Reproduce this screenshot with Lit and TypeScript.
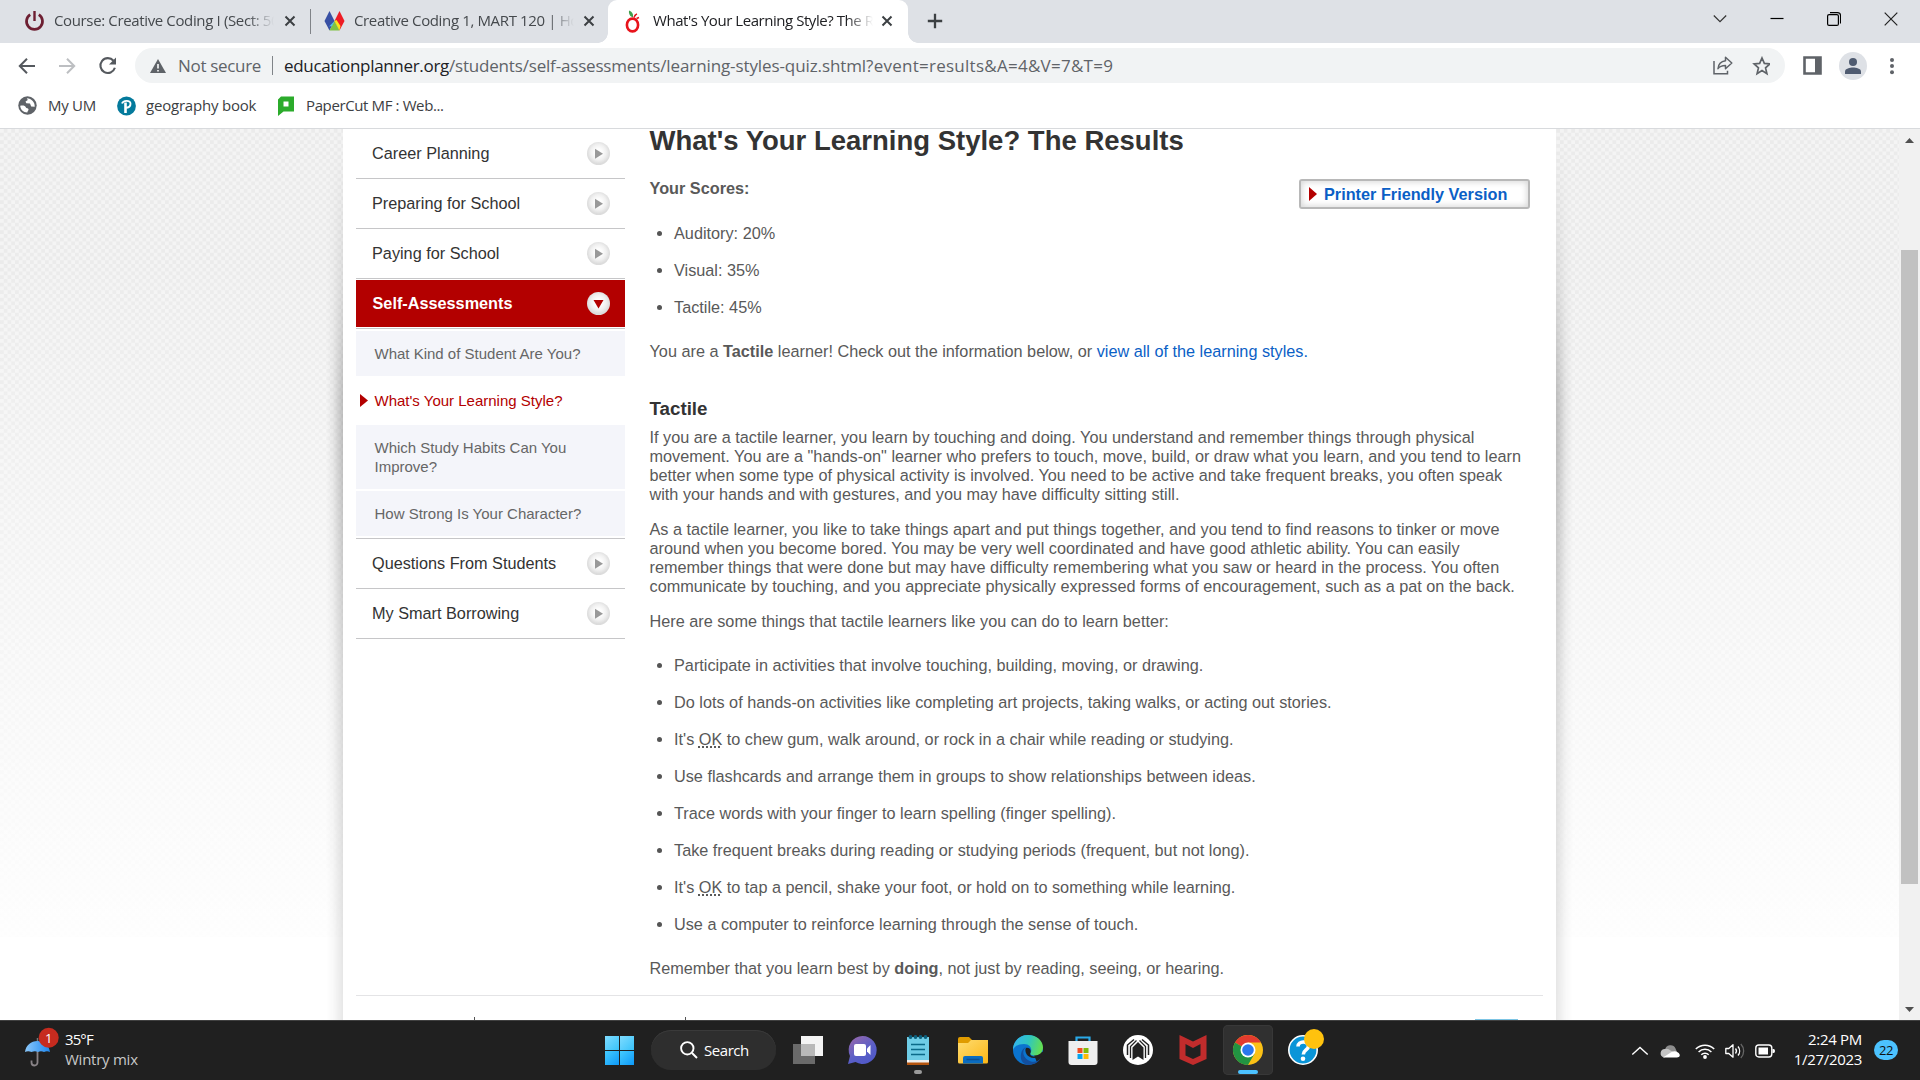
import { LitElement, html, svg, css, nothing } from "lit";
import { customElement, property } from "lit/decorators.js";

const closeIcon = html`<svg width="12" height="12" viewBox="0 0 12 12"><path d="M1.5 1.5l9 9M10.5 1.5l-9 9" stroke="#3c4043" stroke-width="2" fill="none"/></svg>`;

@customElement("browser-tabs")
class BrowserTabs extends LitElement {
  static styles = css`
    :host { display: grid; grid-template-columns: 598px 320px 34px 1fr 57px 57px 57px 58px; height: 43px; background: #dee1e6; font: 15px "Open Sans", "Noto Sans", sans-serif; color: #45494d; }
    svg { display: block; }
    .idle { display: grid; grid-template-columns: 24px 22px 8px 220px 10px 12px 8px 20px 22px 8px 229px 12px; align-items: center; height: 42px; }
    .idle .sep { width: 1px; height: 25px; background: #808388; margin-left: 6px; }
    .title { white-space: nowrap; overflow: hidden; letter-spacing: -0.36px; line-height: 22px; width: 220px; margin-top: -2px; -webkit-mask-image: linear-gradient(90deg, #000 88%, transparent); mask-image: linear-gradient(90deg, #000 88%, transparent); }
    .active .title { letter-spacing: -0.45px; }
    .active { display: grid; grid-template-columns: 10px 300px 10px; }
    .body { background: #fff; border-radius: 9px 9px 0 0; display: grid; grid-template-columns: 16px 20px 9px 220px 8px 13px; align-items: center; height: 43px; padding-bottom: 1px; box-sizing: border-box; color: #202124; }
    .curve { align-self: end; width: 10px; height: 10px; background: radial-gradient(circle at 0 0, transparent 9.5px, #fff 10px); }
    .curve.r { background: radial-gradient(circle at 100% 0, transparent 9.5px, #fff 10px); }
    .mid { align-self: center; justify-self: center; margin-bottom: 1px; }
    .ctl { justify-self: center; margin-top: 12px; }
  `;
  render() {
    return html`
      <div class="idle">
        <span></span>
        <svg width="21" height="22" viewBox="0 0 21 22"><path d="M6.2 4.6A8 8 0 1 0 14.8 4.6" fill="none" stroke="#6d1f32" stroke-width="2.7"/><path d="M10.5 1v10" stroke="#6d1f32" stroke-width="2.4"/></svg>
        <span></span><span class="title">Course: Creative Coding I (Sect: 50</span><span></span>
        ${closeIcon}<span></span>
        <span class="sep"></span>
        <svg width="21" height="22" viewBox="0 0 21 22"><path d="M5.5 1l5 10-5 9.500-5-9.500z" fill="#3850a4"/><path d="M15.500 1l5 10-5 9.500-5-9.500z" fill="#ee1c25"/><path d="M10.500 11l5 9.500h-10z" fill="#7ec242"/><path d="M10.500 11l2-1 4 6-1 4.500z" fill="#f8e71c"/><path d="M8 16l2.500-5L5 16.500z" fill="#4fc3e8"/></svg>
        <span></span><span class="title">Creative Coding 1, MART 120 | Hom</span>
        ${closeIcon}
      </div>
      <div class="active">
        <span class="curve"></span>
        <div class="body">
          <span></span>
          <svg width="18" height="25" viewBox="0 0 18 25"><ellipse cx="8.500" cy="16" rx="5.600" ry="6.400" fill="none" stroke="#e8141c" stroke-width="2.600"/><path d="M8 8C5.500 7 4.500 4 5 1.500 8 2.500 9.500 5 9 8z" fill="#3f9f4d"/><path d="M10 8.500c.5-2 1.500-3 3-3.600M12.500 9.500l2.500-1" stroke="#e8141c" stroke-width="1.500"/></svg>
          <span></span><span class="title">What's Your Learning Style? The Res</span><span></span>
          ${closeIcon}
        </div>
        <span class="curve r"></span>
      </div>
      <svg class="mid" width="16" height="16" viewBox="0 0 16 16"><path d="M8 .8v14.400M.8 8h14.400" stroke="#3c4043" stroke-width="2.300"/></svg>
      <span></span>
      <svg class="ctl" width="14" height="14" viewBox="0 0 14 14"><path d="M.8 3.500L7 9.700l6.200-6.200" fill="none" stroke="#333" stroke-width="1.200"/></svg>
      <svg class="ctl" width="14" height="14" viewBox="0 0 14 14"><path d="M.5 6.500h13" stroke="#000" stroke-width="1.200"/></svg>
      <svg class="ctl" width="14" height="14" viewBox="0 0 14 14"><rect x=".6" y="2.600" width="10.800" height="10.800" rx="1.500" fill="none" stroke="#000" stroke-width="1.200"/><path d="M3 .6h7.500a3 3 0 0 1 3 3v7.800" fill="none" stroke="#000" stroke-width="1.100"/></svg>
      <svg class="ctl" width="14" height="14" viewBox="0 0 14 14"><path d="M.7.7l12.600 12.600M13.300.7L.7 13.300" stroke="#222" stroke-width="1.200"/></svg>
    `;
  }
}

@customElement("browser-toolbar")
class BrowserToolbar extends LitElement {
  static styles = css`
    :host { display: block; height: 85px; background: #fff; border-bottom: 1px solid #d8dadd; font-family: "Open Sans", "Noto Sans", sans-serif; }
    svg { display: block; }
    .nav { display: grid; grid-template-columns: 18px 40px 40px 37px 1650px 18px 20px 16px 28px 18px 10px; align-items: center; padding-top: 5px; height: 35px; }
    .pill { height: 35px; border-radius: 18px; background: #f1f3f4; display: grid; grid-template-columns: 15px 17px 11px 94px 12px 1fr 20px 37px 15px; align-items: center; font-size: 17px; line-height: 24px; white-space: nowrap; color: #5f6368; box-sizing: border-box; }
    .sec { letter-spacing: -0.32px; }
    .bar { width: 1px; height: 19px; background: #808488; }
    .url { letter-spacing: -0.32px; }
    .url b { font-weight: 400; color: #202124; }
    .dir { letter-spacing: -0.18px; } .file { letter-spacing: -0.1px; } .query { letter-spacing: 0.26px; }
    .avatar { width: 28px; height: 28px; border-radius: 50%; background: #dee1e6; display: grid; place-items: center; }
    .marks { display: grid; grid-template-columns: 18px 20px 10px 69px 20px 9px 132px 18px 10px 1fr; align-items: center; height: 45px; font-size: 15px; line-height: 22px; color: #3c4043; white-space: nowrap; }
    .marks span { margin-top: -2px; }
    .m1 { letter-spacing: -0.3px; } .m2 { letter-spacing: -0.2px; } .m3 { letter-spacing: -0.38px; }
  `;
  render() {
    return html`
      <div class="nav">
        <span></span>
        <svg width="18" height="18" viewBox="0 0 18 18"><path d="M17 9H2M9 1.800L1.800 9 9 16.200" fill="none" stroke="#55595e" stroke-width="2"/></svg>
        <svg width="18" height="18" viewBox="0 0 18 18"><path d="M1 9h15M9 1.800L16.200 9 9 16.200" fill="none" stroke="#bdbfc2" stroke-width="2"/></svg>
        <svg width="20" height="20" viewBox="0 0 20 20"><path d="M15.500 4.800A7.400 7.400 0 1 0 16.900 11.800" fill="none" stroke="#55595e" stroke-width="2.100"/><path d="M18 1.500v7h-7z" fill="#55595e"/></svg>
        <div class="pill">
          <span></span>
          <svg width="16" height="14" viewBox="0 0 16 14"><path d="M8 0l8 14H0z" fill="#5f6368"/><path d="M8 5v4.500M8 11v1.600" stroke="#f1f3f4" stroke-width="1.700"/></svg>
          <span></span><span class="sec">Not secure</span><i class="bar"></i>
          <span class="url"><b>educationplanner.org</b><span class="dir">/students/self-assessments/</span><span class="file">learning-styles-quiz.shtml</span><span class="query">?event=results&amp;A=4&amp;V=7&amp;T=9</span></span>
          <svg width="20" height="19" viewBox="0 0 20 19"><path d="M1 5v12.800h13.500v-3" fill="none" stroke="#5f6368" stroke-width="1.500"/><path d="M12.500 1.300l6.300 5.700-6.300 5.700V9.500c-4 0-6 1-7.500 3.200.3-4.500 3-7.400 7.500-8z" fill="none" stroke="#5f6368" stroke-width="1.500" stroke-linejoin="round"/></svg>
          <svg width="37" height="20" viewBox="0 0 37 20"><path d="M29 2l2.350 5.450 5.500.5-4.300 3.900 1.350 5.800L29 14.550l-4.900 3.100 1.350-5.800-4.300-3.900 5.500-.5z" fill="none" stroke="#5f6368" stroke-width="1.700"/></svg>
          <span></span>
        </div>
        <span></span>
        <svg width="19" height="19" viewBox="0 0 19 19"><path d="M1.500 1.500h16v16h-16z" fill="#fff" stroke="#5f6368" stroke-width="2.600"/><path d="M12 1h6v17h-6z" fill="#5f6368"/></svg>
        <span></span>
        <span class="avatar"><svg width="16" height="16" viewBox="0 0 16 16"><circle cx="8" cy="4" r="4" fill="#4f5b70"/><path d="M0 16v-2.500C0 10.500 5 9.500 8 9.500s8 1 8 4V16z" fill="#4f5b70"/></svg></span>
        <span></span>
        <svg width="10" height="18" viewBox="0 0 10 18"><g fill="#5f6368"><circle cx="7" cy="3" r="2"/><circle cx="7" cy="9" r="2"/><circle cx="7" cy="15.300" r="2"/></g></svg>
      </div>
      <div class="marks">
        <span></span>
        <svg width="19" height="19" viewBox="0 0 19 19"><circle cx="9.500" cy="9.500" r="9.200" fill="#5f6368"/><path d="M2.200 9.800c3-.6 5 0 5.600 1.400.5 1.300 2.400.6 2.700 2 .2 1.200-1 1.500-1.200 3.300-4 0-7-3-7.100-6.700zM8.800 2.300l1 1.700-2.300 1.600.8 1.700 3.700.2 1.200 2.900 3.500.3c.3-4.200-3-8.100-7.900-8.400z" fill="#fff"/></svg>
        <span></span><span class="m1">My UM</span>
        <svg width="19" height="20" viewBox="0 0 19 20"><circle cx="9.500" cy="10" r="9.400" fill="#047a9c"/><path d="M8.500 17V6.500" stroke="#fff" stroke-width="2.600"/><path d="M5 7.500C6 4.500 13.500 3.500 13.500 7.800c0 3-2.500 4-5 4" fill="none" stroke="#fff" stroke-width="1.900"/></svg>
        <span></span><span class="m2">geography book</span>
        <svg width="16" height="20" viewBox="0 0 16 20"><path d="M3 .5h13v15H5.500L0 20V3.500z" fill="#2bab2b"/><path d="M5.500 5.500h5v5h-5z" fill="#fff"/></svg>
        <span></span><span class="m3">PaperCut MF : Web...</span>
      </div>
    `;
  }
}

@customElement("side-nav")
class SideNav extends LitElement {
  static styles = css`
    :host { display: block; width: 269px; font: 16.25px/22px "Liberation Sans", Arial, sans-serif; color: #333; }
    .item { box-sizing: border-box; height: 50px; border-bottom: 1px solid #c6c6c8; display: flex; align-items: center; justify-content: space-between; padding: 0 15px 2px 16px; white-space: nowrap; }
    .item.open { height: 47px; background: #b30000; color: #fff; font-weight: 700; border: 0; margin-top: 1px; padding-left: 16.500px; }
    .rule { height: 1px; background: #c6c6c8; margin-top: 1px; }
    .dot { width: 23px; height: 23px; border-radius: 50%; background: radial-gradient(circle closest-side at 50% 45%, #fdfdfd 35%, #f0f0f0 75%, #dcdcdc 110%); display: grid; place-items: center; margin-top: 2px; }
    .sub { font-size: 15px; line-height: 19px; color: #666; background: #f4f5fa; padding: 13px 30px 13px 18.500px; margin-top: 2px; }
    .sub.on { background: none; color: #b30000; display: grid; grid-template-columns: 14.500px 1fr; padding-left: 4px; align-items: center; }
    .end { margin-top: 2px; }
  `;
  row(label: string) {
    return html`<div class="item"><span>${label}</span><span class="dot"><svg width="9" height="12" viewBox="0 0 9 12"><path d="M1 .8l8 5-8 5z" fill="#999"/></svg></span></div>`;
  }
  render() {
    return html`
      ${["Career Planning", "Preparing for School", "Paying for School"].map((l) => this.row(l))}
      <div class="item open"><span>Self-Assessments</span><span class="dot"><svg width="11" height="10" viewBox="0 0 11 10"><path d="M.5 1h10l-5 8.500z" fill="#b30000"/></svg></span></div>
      <div class="rule"></div>
      <div class="sub">What Kind of Student Are You?</div>
      <div class="sub on"><svg width="8" height="13" viewBox="0 0 8 13"><path d="M0 0l8 6.500L0 13z" fill="#b30000"/></svg><span>What's Your Learning Style?</span></div>
      <div class="sub">Which Study Habits Can You<br>Improve?</div>
      <div class="sub">How Strong Is Your Character?</div>
      <div class="rule end"></div>
      ${["Questions From Students", "My Smart Borrowing"].map((l) => this.row(l))}
    `;
  }
}

@customElement("quiz-results")
class QuizResults extends LitElement {
  static styles = css`
    :host { display: block; width: 890px; font: 16.25px/19px "Liberation Sans", Arial, sans-serif; color: #595959; white-space: nowrap; }
    h1 { margin: 0; padding-top: 1px; font-size: 27.500px; line-height: 22px; color: #333; }
    .top { display: flex; justify-content: space-between; align-items: flex-start; height: 72px; box-sizing: border-box; padding: 27px 9.500px 0 0; }
    .scores { font-weight: 700; }
    .print { box-sizing: border-box; width: 231px; height: 30px; display: flex; align-items: center; gap: 7px; padding-left: 8px; border: 2px solid #b8b8b8; border-radius: 3px; box-shadow: inset 0 0 6px 1px #d6d6d6; color: #0b5fc6; font-weight: 700; }
    ul { list-style: none; margin: 0; padding: 0; }
    li { display: grid; grid-template-columns: 24.500px 1fr; align-items: center; height: 37px; }
    li::before { content: ""; width: 5px; height: 5px; border-radius: 50%; background: #555; margin-left: 7.500px; margin-top: -1px; }
    .s { margin-top: -9px; }
    p { margin: 0; }
    .you, .p2, .p3, .tips, .last { margin-top: 16px; }
    a { color: #0b5fc6; text-decoration: none; }
    h2 { margin: 37px 0 0; font-size: 18.750px; line-height: 22px; color: #333; }
    .p1 { margin-top: 8px; }
    abbr { text-decoration: underline dotted 1.500px; text-underline-offset: 1px; }
  `;
  render() {
    const ok = html`<abbr>OK</abbr>`;
    const tips = [
      "Participate in activities that involve touching, building, moving, or drawing.",
      "Do lots of hands-on activities like completing art projects, taking walks, or acting out stories.",
      html`It's ${ok} to chew gum, walk around, or rock in a chair while reading or studying.`,
      "Use flashcards and arrange them in groups to show relationships between ideas.",
      "Trace words with your finger to learn spelling (finger spelling).",
      "Take frequent breaks during reading or studying periods (frequent, but not long).",
      html`It's ${ok} to tap a pencil, shake your foot, or hold on to something while learning.`,
      "Use a computer to reinforce learning through the sense of touch.",
    ];
    return html`
      <h1>What's Your Learning Style? The Results</h1>
      <div class="top">
        <span class="scores">Your Scores:</span>
        <span class="print"><svg width="8" height="14" viewBox="0 0 8 14"><path d="M0 0l8 7-8 7z" fill="#b30000"/></svg>Printer Friendly Version</span>
      </div>
      <ul class="s">${["Auditory: 20%", "Visual: 35%", "Tactile: 45%"].map((t) => html`<li><span>${t}</span></li>`)}</ul>
      <p class="you">You are a <b>Tactile</b> learner! Check out the information below, or <a>view all of the learning styles.</a></p>
      <h2>Tactile</h2>
      <p class="p1">If you are a tactile learner, you learn by touching and doing. You understand and remember things through physical<br>movement. You are a "hands-on" learner who prefers to touch, move, build, or draw what you learn, and you tend to learn<br>better when some type of physical activity is involved. You need to be active and take frequent breaks, you often speak<br>with your hands and with gestures, and you may have difficulty sitting still.</p>
      <p class="p2">As a tactile learner, you like to take things apart and put things together, and you tend to find reasons to tinker or move<br>around when you become bored. You may be very well coordinated and have good athletic ability. You can easily<br>remember things that were done but may have difficulty remembering what you saw or heard in the process. You often<br>communicate by touching, and you appreciate physically expressed forms of encouragement, such as a pat on the back.</p>
      <p class="p3">Here are some things that tactile learners like you can do to learn better:</p>
      <ul class="tips">${tips.map((t) => html`<li><span>${t}</span></li>`)}</ul>
      <p class="last">Remember that you learn best by <b>doing</b>, not just by reading, seeing, or hearing.</p>
    `;
  }
}

@customElement("web-page")
class WebPage extends LitElement {
  static styles = css`
    :host { display: grid; grid-template-columns: 326px 17px 1213px 17px 1fr 21px; height: 891px; overflow: hidden; background: linear-gradient(180deg, rgba(255,255,255,0) 130px, rgba(255,255,255,.92) 808px, #fff 808px), repeating-conic-gradient(#ebebeb 0 25%, #f4f4f4 0 50%) 0 0 / 7.500px 7.500px; }
    .shade { background: linear-gradient(90deg, rgba(0,0,0,0), rgba(0,0,0,.05) 40%, rgba(0,0,0,.22)); -webkit-mask-image: linear-gradient(180deg, rgba(0,0,0,.02) 20px, rgba(0,0,0,.4) 150px, #000 270px, #000 320px, rgba(0,0,0,.6) 550px, rgba(0,0,0,.42) 891px); }
    .shade.r { background: linear-gradient(270deg, rgba(0,0,0,0), rgba(0,0,0,.05) 40%, rgba(0,0,0,.22)); }
    .sheet { background: #fff; padding: 0 13px; display: grid; grid-template: 866px 1px 24px / 269px 24.500px 889.500px; height: 891px; box-sizing: border-box; }
    .hr { grid-column: 1 / 4; background: #e4e4e6; width: 1187px; }
    .foot { grid-column: 1 / 4; display: grid; grid-template-columns: 118px 1px 210px 1px 789px 43px; align-items: end; }
    .tick { height: 3px; background: #555; }
    .blue { height: 1px; background: #7cc4e4; }
    .track { grid-column: 6; background: #f1f1f1; display: grid; grid-template-rows: 121px 634px 1fr; justify-items: center; }
    .thumb { width: 17px; height: 634px; background: #c1c1c1; }
    .up { margin-top: 9px; } .down { align-self: end; margin-bottom: 8px; }
  `;
  render() {
    return html`
      <span></span><i class="shade"></i>
      <div class="sheet">
        <side-nav></side-nav><span></span>
        <div><quiz-results></quiz-results></div>
        <i class="hr"></i>
        <div class="foot"><span></span><i class="tick"></i><span></span><i class="tick"></i><span></span><i class="blue"></i></div>
      </div>
      <i class="shade r"></i>
      <div class="track">
        <svg class="up" width="9" height="5" viewBox="0 0 9 5"><path d="M0 5h9L4.500 0z" fill="#505050"/></svg>
        <i class="thumb"></i>
        <svg class="down" width="9" height="5" viewBox="0 0 9 5"><path d="M0 0h9L4.500 5z" fill="#505050"/></svg>
      </div>
    `;
  }
}

const apps: Record<string, unknown> = {
  taskview: svg`<path d="M0 9h22v20H0z" fill="#6a6a6a"/><path d="M8 1h22v20H8z" fill="#f4f4f4"/><path d="M8 9h14v12H8z" fill="#b9b9b9"/>`,
  chat: svg`<defs><linearGradient id="c" x1="0" x2=".7" y2="1"><stop offset="0" stop-color="#a069a8"/><stop offset=".6" stop-color="#5b5fc7"/><stop offset="1" stop-color="#5059c9"/></linearGradient></defs><path d="M14.500 1a14 14 0 1 1-7 26L0 29l2-8A14 14 0 0 1 14.500 1z" fill="url(#c)"/><rect x="6" y="9" width="12" height="12" rx="2" fill="#fff"/><path d="M19 13.500L22.500 10v10L19 16.500z" fill="#fff"/>`,
  notepad: svg`<path d="M4 27h22v3H4z" fill="#b3540e"/><path d="M4 25h22v2.500H4z" fill="#eee"/><path d="M4 2h22v23H4z" fill="#6fcde6"/><path d="M8 9.500h14M8 14.500h14M8 19.500h14" stroke="#0b6a88" stroke-width="1.700"/><g fill="#0b5f7d"><circle cx="7.500" cy="2" r="1.900"/><circle cx="12.500" cy="2" r="1.900"/><circle cx="17.500" cy="2" r="1.900"/><circle cx="22.500" cy="2" r="1.900"/></g>`,
  folder: svg`<path d="M0 4q0-2 2-2h9l3 3-2 4H0z" fill="#e09b00"/><defs><linearGradient id="f" x2="1" y2="1"><stop stop-color="#ffdc70"/><stop offset="1" stop-color="#fbb616"/></linearGradient></defs><path d="M0 8h10l3-3h17v22q0 1.500-1.500 1.500h-27Q0 28.500 0 27z" fill="url(#f)"/><path d="M5 28.500V23q0-2 2-2h16q2 0 2 2v5.500z" fill="#0a6cc0"/><path d="M8.500 24.500h13" stroke="#0b4f93" stroke-width="1.500"/>`,
  edge: svg`<defs><linearGradient id="e" x1="0" y1=".3" x2="1" y2=".5"><stop stop-color="#33b4ef"/><stop offset=".5" stop-color="#2fc6c0"/><stop offset="1" stop-color="#66e04c"/></linearGradient></defs><circle cx="15" cy="15" r="15" fill="#0b74cf"/><path d="M24 27.500L21 20l9.500-3.500V24z" fill="#202020"/><path d="M0 13C1 5 7 0 15 0c9 0 15 6 15 12.500 0 5-4 8-8.500 8-3 0-4.500-1.300-4-2.500C19.500 15 18 9 11 9 6 9 1.500 11 0 15z" fill="url(#e)"/><path d="M13 12c-5 4-3 12 5 14.500 4 1 8-.8 10-3.500C25 28 20 30 15 30 9 29 7 24 8 19c.6-3.500 2.500-6 5-7z" fill="#134f9e"/><path d="M13 13c-2 3 1 10 8 10 3 0 5-1 7-2-2 0-10 2-11-2 2-3 0-7-4-6z" fill="#202020"/>`,
  store: svg`<path d="M8.500 7V2.500h13V7" fill="none" stroke="#2aa9e8" stroke-width="2.200"/><path d="M.5 6h29v21q0 3-3 3h-23q-3 0-3-3z" fill="#efefef"/><path d="M9.500 13h5v5h-5z" fill="#f04e23"/><path d="M15.500 13h5v5h-5z" fill="#80bb0a"/><path d="M9.500 19h5v5h-5z" fill="#06a5ef"/><path d="M15.500 19h5v5h-5z" fill="#feba08"/>`,
  arc: svg`<circle cx="15" cy="15" r="15" fill="#fff"/><path d="M4.500 20V10L11 4.500M25.500 20V10L19 4.500" fill="none" stroke="#222" stroke-width="1.500"/><path d="M7.500 23V11.500L13.500 5.500M22.500 23V11.500L16.500 5.500" fill="none" stroke="#222" stroke-width="1.300"/><path d="M9.500 25V12.500L15 7l5.500 5.500V25L15 21.500z" fill="#222"/>`,
  shield: svg`<path d="M1.500 0L15 6.500 28.500 0v24L15 30 1.500 24z" fill="#c12c2c"/><path d="M7.500 9L15 13l7.500-4v11.500L15 24l-7.500-3.500z" fill="#202020"/>`,
  chrome: svg`<circle cx="15" cy="15" r="15" fill="#fbc116"/><path d="M15 15L2 7.500A15 15 0 0 1 28 7.500H15z" fill="#e33b2e"/><path d="M2 7.500A15 15 0 0 0 15 30l6.500-11.300-6.500-3.700z" fill="#229342"/><circle cx="15" cy="15" r="7.500" fill="#fff"/><circle cx="15" cy="15" r="5.800" fill="#2b78ee"/>`,
  help: svg`<circle cx="15" cy="15" r="14.200" fill="#0a95d8" stroke="#fff" stroke-width="1.600"/><path d="M10 11.500c0-6 10.500-6 10.500-.5 0 4-5.200 4-5.200 8.500" fill="none" stroke="#fff" stroke-width="3.600"/><circle cx="15" cy="23.700" r="2.300" fill="#fff"/><circle cx="26" cy="4" r="10" fill="#ffc20e"/>`,
};

@customElement("app-icon")
class AppIcon extends LitElement {
  @property() name = "";
  static styles = css`:host { display: block; } svg { display: block; overflow: visible; }`;
  render() { return html`<svg width="30" height="30" viewBox="0 0 30 30">${apps[this.name] ?? nothing}</svg>`; }
}

@customElement("task-bar")
class TaskBar extends LitElement {
  static styles = css`
    :host { display: grid; grid-template-columns: 25px 28px 12px 527px 1038px 20px 10px 20px 15px 20px 10px 20px 10px 20px 1fr 12px 24px 22px; align-items: center; height: 60px; box-sizing: border-box; border-top: 1px solid #404040; background: #202020; color: #fff; font: 15px/20px "Open Sans", "Noto Sans", sans-serif; white-space: nowrap; }
    svg { display: block; overflow: visible; }
    .weather { letter-spacing: -0.25px; margin-top: -3px; } .weather span { display: block; } .weather .t { letter-spacing: -0.9px; } .dim { color: #c8c8c8; }
    .apps { display: flex; align-items: center; height: 58px; align-self: start; }
    .win { width: 29px; height: 29px; margin: 0 17px 0 13px; display: grid; grid-template-columns: 14px 14px; grid-template-rows: 14px 14px; gap: 1px; }
    .win i { background: linear-gradient(135deg, #7fdcff, #38c2fa); } .win i + i + i { background: linear-gradient(135deg, #45ccff, #0d99f8); }
    .search { width: 125px; height: 40px; border-radius: 20px; background: #2e2e2e; box-shadow: inset 0 1px #3a3a3a; display: flex; align-items: center; gap: 6px; padding-left: 29px; box-sizing: border-box; margin-right: 4px; }
    .search span { letter-spacing: -0.45px; }
    .cell { width: 55.100px; height: 50px; display: grid; grid-template-rows: 1fr; place-items: center; }
    .tile { width: 50px; height: 50px; display: grid; grid-template-rows: 10px 30px 5px 5px; justify-items: center; border-radius: 5px; }
    .tile.on { background: #303030; box-shadow: inset 0 0 0 1px #383838; }
    .mark { width: 8px; height: 4px; border-radius: 2px; background: #9a9a9a; }
    .on .mark { width: 20px; background: #4cc2ff; }
    .clock { text-align: right; letter-spacing: -0.3px; margin-top: -3px; } .clock span { display: block; }
    .count { width: 24px; height: 20px; border-radius: 10px; background: #4cc2ff; color: #111; font-size: 13px; letter-spacing: -0.5px; text-align: center; margin-top: -1px; }
    .wtext { font-family: "Open Sans", sans-serif; font-size: 13px; }
  `;
  render() {
    const names = ["taskview", "chat", "notepad", "folder", "edge", "store", "arc", "shield", "chrome", "help"];
    return html`
      <span></span>
      <svg width="28" height="40" viewBox="0 0 28 40"><defs><linearGradient id="u"><stop stop-color="#8cc8fa"/><stop offset="1" stop-color="#1e88f0"/></linearGradient></defs><path d="M12.500 20v11.500a3 3 0 0 1-6 0v-2" fill="none" stroke="#8a8488" stroke-width="1.800"/><path d="M12.500 7v4" stroke="#777" stroke-width="1.500"/><path d="M0 21C1 14 6 10 12.500 10S24 14 25 21q-3-1.500-6 0-3-1.500-6 0-3-1.500-6.500 0Q3 19.500 0 21z" fill="url(#u)"/><circle cx="23.700" cy="6.700" r="10" fill="#c62b1f"/><text class="wtext" x="23.700" y="11.500" text-anchor="middle" fill="#fff">1</text></svg>
      <span></span>
      <div class="weather"><span class="t">35°F</span><span class="dim">Wintry mix</span></div>
      <div class="apps">
        <div class="win"><i></i><i></i><i></i><i></i></div>
        <div class="search"><svg width="18" height="18" viewBox="0 0 18 18"><circle cx="7.300" cy="7.300" r="6.200" fill="none" stroke="#fff" stroke-width="1.900"/><path d="M12 12l5 5" stroke="#fff" stroke-width="2"/></svg><span>Search</span></div>
        ${names.map((n) => html`<div class="cell"><div class="tile ${n === "chrome" ? "on" : ""}"><span></span><app-icon .name=${n}></app-icon><span></span>${n === "chrome" || n === "notepad" ? html`<i class="mark"></i>` : nothing}</div></div>`)}
      </div>
      <svg width="20" height="14" viewBox="0 0 20 14"><path d="M2.300 10.500L10 3.500l7.700 7" fill="none" stroke="#fff" stroke-width="1.400"/></svg>
      <span></span>
      <svg width="20" height="14" viewBox="0 0 20 14"><path d="M5 6a5.500 5.500 0 0 1 10.500-1.500L17 8 6 9z" fill="#8d8d8d"/><path d="M4 13.500A4.300 4.300 0 0 1 5 5q3-1 5.500 1.500L16 9z" fill="#c4c4c4"/><path d="M3 13.500l7-4.500q4-3 8-.5c3 2 2 5-1 5z" fill="#fff"/></svg>
      <span></span>
      <svg width="20" height="16" viewBox="0 0 20 16"><g fill="none" stroke="#fff" stroke-width="1.500"><path d="M.8 6a13 13 0 0 1 18.400 0M3.600 9a9 9 0 0 1 12.800 0M6.300 11.800a5.200 5.200 0 0 1 7.400 0"/></g><circle cx="10" cy="14" r="1.900" fill="#fff"/></svg>
      <span></span>
      <svg width="20" height="16" viewBox="0 0 20 16"><path d="M.8 5.500h3L8 1.800v12.400L3.800 10.500h-3z" fill="none" stroke="#fff" stroke-width="1.300" stroke-linejoin="round"/><path d="M10.500 5.500a4 4 0 0 1 0 5M13 3.500a7 7 0 0 1 0 9" fill="none" stroke="#fff" stroke-width="1.300"/><path d="M15.800 1a10 10 0 0 1 0 14" fill="none" stroke="#666" stroke-width="1.300"/></svg>
      <span></span>
      <svg width="20" height="14" viewBox="0 0 20 14"><rect x=".8" y="1" width="16" height="12" rx="3" fill="none" stroke="#fff" stroke-width="1.400"/><path d="M3.500 3.500h9.500v7H3.500z" fill="#fff"/><path d="M17.500 5h1q1.500 0 1.500 2t-1.500 2h-1z" fill="#fff"/></svg>
      <div class="clock"><span>2:24 PM</span><span>1/27/2023</span></div>
      <span></span>
      <span class="count">22</span>
    `;
  }
}

@customElement("app-root")
class AppRoot extends LitElement {
  static styles = css`:host { display: block; width: 1920px; height: 1080px; overflow: hidden; }`;
  render() {
    return html`<browser-tabs></browser-tabs><browser-toolbar></browser-toolbar><web-page></web-page><task-bar></task-bar>`;
  }
}
